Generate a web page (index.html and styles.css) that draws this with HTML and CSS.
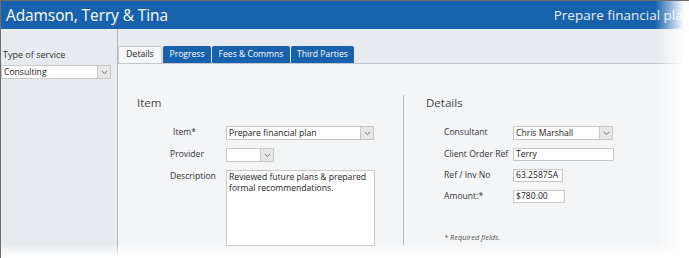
FILE: index.html
```html
<!DOCTYPE html>
<html>
<head>
<meta charset="utf-8">
<link rel="stylesheet" href="styles.css">
</head>
<body>
<div class="window">
  <header class="header">
    <div class="client">Adamson, Terry &amp; Tina</div>
    <div class="task">Prepare financial plan</div>
  </header>
  <div class="main">
    <aside class="sidebar">
      <div class="side-label">Type of service</div>
      <div class="select side-select"><span class="val">Consulting</span><span class="arrow"><svg width="7" height="5" viewBox="0 0 7 5"><path d="M0.8 1 L3.5 3.6 L6.2 1" fill="none" stroke="#777" stroke-width="1"/></svg></span></div>
    </aside>
    <section class="content">
      <nav class="tabs">
        <div class="tab active">Details</div>
        <div class="tab">Progress</div>
        <div class="tab">Fees &amp; Commns</div>
        <div class="tab">Third Parties</div>
      </nav>
      <div class="panel">
        <div class="col col-item">
          <h2 class="heading">Item</h2>
          <div class="form form-item">
            <label class="lbl lbl-item">Item*</label>
            <div class="select sel-item"><span class="val">Prepare financial plan</span><span class="arrow"><svg width="7" height="5" viewBox="0 0 7 5"><path d="M0.8 1 L3.5 3.6 L6.2 1" fill="none" stroke="#777" stroke-width="1"/></svg></span></div>
            <label class="lbl">Provider</label>
            <div class="select sel-provider"><span class="val"></span><span class="arrow"><svg width="7" height="5" viewBox="0 0 7 5"><path d="M0.8 1 L3.5 3.6 L6.2 1" fill="none" stroke="#777" stroke-width="1"/></svg></span></div>
            <label class="lbl">Description</label>
            <div class="textarea">Reviewed future plans &amp; prepared formal recommendations.</div>
          </div>
        </div>
        <div class="col col-details">
          <h2 class="heading">Details</h2>
          <div class="form form-details">
            <label class="lbl">Consultant</label>
            <div class="select sel-consultant"><span class="val">Chris Marshall</span><span class="arrow"><svg width="7" height="5" viewBox="0 0 7 5"><path d="M0.8 1 L3.5 3.6 L6.2 1" fill="none" stroke="#777" stroke-width="1"/></svg></span></div>
            <label class="lbl">Client Order Ref</label>
            <div class="input in-order">Terry</div>
            <label class="lbl">Ref / Inv No</label>
            <div class="input in-ref">63.25875A</div>
            <label class="lbl">Amount:*</label>
            <div class="input in-amount">$780.00</div>
          </div>
          <p class="note">* Required fields.</p>
        </div>
      </div>
    </section>
  </div>
  <div class="fade-right"></div>
  <div class="fade-bottom"></div>
</div>
</body>
</html>
```
FILE: styles.css
```css
html, body {
  margin: 0;
  padding: 0;
  background: #ffffff;
}
body {
  width: 689px;
  height: 258px;
  overflow: hidden;
  font-family: "Open Sans", "Noto Sans", sans-serif;
  color: #333;
}
.window {
  position: relative;
  width: 689px;
  height: 258px;
  overflow: hidden;
  border-top: 1px solid #6f6f6f;
  border-left: 1px solid #6f6f6f;
  box-sizing: border-box;
}
.header {
  height: 28px;
  background: #1862ad;
  display: flex;
  align-items: center;
  justify-content: space-between;
  width: 730px;
  box-sizing: border-box;
  padding-left: 5px;
  padding-right: 40px;
  color: #fff;
}
.client {
  font-size: 15.5px;
  letter-spacing: -0.1px;
  margin-top: -1px;
}
.task {
  font-size: 13.5px;
  color: #e8eef6;
  margin-top: -1px;
}
.main {
  display: flex;
  height: 229px;
}
.sidebar {
  width: 116px;
  background: #e7ebef;
  border-right: 1px solid #b4b8bc;
  padding-top: 20px;
  box-sizing: content-box;
}
.side-label {
  font-size: 9px;
  color: #333;
  padding-left: 2px;
  height: 16px;
  line-height: 12px;
}
.select {
  display: flex;
  align-items: stretch;
  background: #fff;
  border: 1px solid #c6c8ca;
  box-sizing: border-box;
  height: 14px;
  font-size: 8.6px;
  color: #222;
}
.select .val {
  flex: 1;
  padding-left: 2px;
  line-height: 12px;
  white-space: nowrap;
  overflow: hidden;
}
.select .arrow {
  width: 12px;
  background: #e6e6e6;
  border-left: 1px solid #c6c8ca;
  display: flex;
  align-items: center;
  justify-content: center;
}
.side-select {
  width: 110px;
  height: 14px;
}
.content {
  flex: 1;
  display: flex;
  flex-direction: column;
}
.tabs {
  height: 34px;
  background: #e7ebef;
  display: flex;
  align-items: flex-end;
  padding-left: 0;
  gap: 1px;
}
.tab {
  height: 17px;
  line-height: 16px;
  font-size: 8.6px;
  color: #fff;
  background: #1862ad;
  border-radius: 2px 2px 0 0;
  box-sizing: border-box;
  text-align: center;
}
.tab.active {
  background: #f6f7f8;
  color: #222;
  border: 1px solid #c3c7cb;
  border-bottom: none;
  line-height: 15px;
  width: 44px;
}
.tab:nth-child(2) { width: 48px; }
.tab:nth-child(3) { width: 78px; }
.tab:nth-child(4) { width: 63px; }
.panel {
  flex: 1;
  background: #f3f5f7;
  border-top: 1px solid #c3c7cb;
  display: flex;
  padding-top: 31px;
}
.col {
  box-sizing: border-box;
}
.col-item {
  width: 286px;
  padding-left: 19px;
  border-right: 1px solid #b8bcc0;
  height: 150px;
}
.col-details {
  padding-left: 22px;
  flex: 1;
}
.heading {
  margin: 0;
  font-weight: normal;
  font-size: 11.5px;
  color: #444;
  height: 16px;
  line-height: 16px;
}
.form {
  display: grid;
  row-gap: 8px;
  align-items: start;
  margin-top: 15px;
}
.form-item {
  grid-template-columns: 56px auto;
  padding-left: 33px;
}
.form-details {
  grid-template-columns: 69px auto;
  padding-left: 18px;
}
.lbl {
  font-size: 8.6px;
  color: #333;
  line-height: 13px;
  white-space: nowrap;
}
.lbl-item {
  padding-left: 3px;
}
.sel-item { width: 148px; }
.sel-provider { width: 48px; }
.sel-consultant { width: 100px; }
.textarea {
  width: 149px;
  height: 76px;
  background: #fff;
  border: 1px solid #c6c8ca;
  box-sizing: border-box;
  font-size: 8.6px;
  line-height: 11px;
  color: #222;
  padding: 1px 2px;
}
.input {
  background: #fff;
  border: 1px solid #c6c8ca;
  box-sizing: border-box;
  height: 13px;
  font-size: 8.6px;
  line-height: 11px;
  color: #222;
  padding-left: 2px;
  white-space: nowrap;
}
.in-order { width: 101px; }
.in-ref { width: 50px; }
.in-amount { width: 52px; }
.note {
  margin: 29px 0 0 18px;
  font-size: 7.4px;
  font-style: italic;
  color: #555;
}
.fade-right {
  position: absolute;
  top: 0;
  right: 0;
  width: 34px;
  height: 100%;
  background: linear-gradient(to right, rgba(255,255,255,0), #ffffff 85%);
}
.fade-bottom {
  position: absolute;
  left: 0;
  bottom: 0;
  width: 100%;
  height: 14px;
  background: linear-gradient(to bottom, rgba(255,255,255,0), #ffffff 90%);
}
```
